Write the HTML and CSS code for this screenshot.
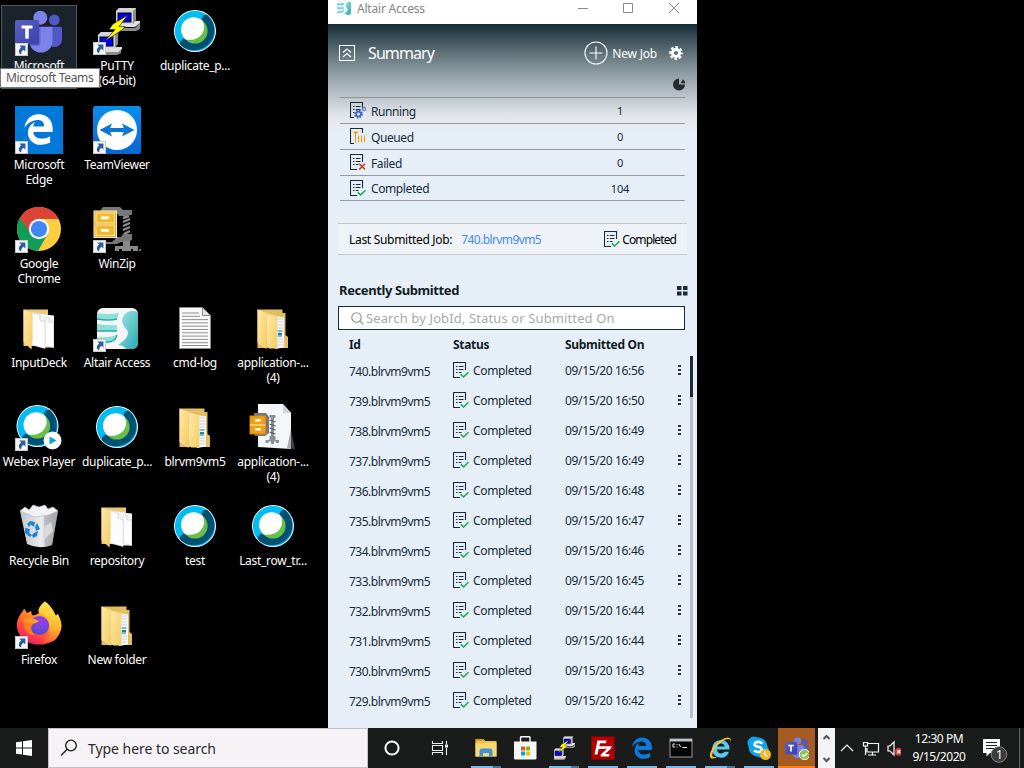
FILE: index.html
```html
<!DOCTYPE html>
<html lang="en">
<head>
<meta charset="utf-8">
<title>Desktop</title>
<link rel="stylesheet" href="styles.css">
</head>
<body>
<svg class="defs" width="0" height="0">
  <defs>
    <linearGradient id="gTeam" x1="0" y1="0" x2="1" y2="1"><stop offset="0" stop-color="#5a62c3"/><stop offset="1" stop-color="#3940ab"/></linearGradient>
    <linearGradient id="gTv" x1="0" y1="0" x2="0" y2="1"><stop offset="0" stop-color="#0a8eec"/><stop offset="1" stop-color="#0667d2"/></linearGradient>
    <linearGradient id="gFolder" x1="0" y1="0" x2="1" y2="1"><stop offset="0" stop-color="#ffe9a2"/><stop offset="1" stop-color="#f2cd6a"/></linearGradient>
    <linearGradient id="gTeal" x1="0" y1="0" x2="1" y2="1"><stop offset="0" stop-color="#a6e6e2"/><stop offset="1" stop-color="#27a9b4"/></linearGradient>
    <linearGradient id="gFox" x1="0.8" y1="0" x2="0.2" y2="1"><stop offset="0" stop-color="#fff44f"/><stop offset=".4" stop-color="#ff9a1f"/><stop offset=".75" stop-color="#ff4240"/><stop offset="1" stop-color="#e31587"/></linearGradient>
    <linearGradient id="gFoxTail" x1="0.6" y1="0" x2="0.4" y2="1"><stop offset="0" stop-color="#fff14a"/><stop offset=".6" stop-color="#ffb52e"/><stop offset="1" stop-color="#ff5a36"/></linearGradient>
    <radialGradient id="gGlobe" cx=".6" cy=".2" r=".9"><stop offset="0" stop-color="#a03cf0"/><stop offset="1" stop-color="#4a4fc4"/></radialGradient>
    <linearGradient id="gBin" x1="0" y1="0" x2="1" y2="0"><stop offset="0" stop-color="#c2c5c8"/><stop offset=".55" stop-color="#e9ebed"/><stop offset="1" stop-color="#9fa3a7"/></linearGradient>
  </defs>
  <symbol id="shortcut" viewBox="0 0 48 48">
    <rect x=".5" y="35.5" width="12" height="12" fill="#f7f7f9" stroke="#c9c9cd"/>
    <path d="M4.300 37.500H10.400V43.500L8.500 41.700C6.600 43.200 6 44.500 6.300 46.300C3.600 45.600 2.600 42 6.200 39.400Z" fill="#2a5d9f"/>
  </symbol>
  <symbol id="teams" viewBox="0 0 48 48">
    <circle cx="39.300" cy="12" r="5.400" fill="#5059c9"/>
    <path d="M35 18.700H45.500Q47 18.700 47 20.200V31.500A7.500 7.500 0 0 1 35 37.500Z" fill="#5059c9"/>
    <circle cx="25.300" cy="9.700" r="7" fill="#7b83eb"/>
    <path d="M14.300 18.700H36Q37.500 18.700 37.500 20.500V33A11.600 11.600 0 0 1 14.300 33Z" fill="#7b83eb"/>
    <path d="M14.300 18.700H25.500V35Q25.500 38 22.500 38H15.500Z" fill="#4a50a8" opacity=".5"/>
    <rect y="12" width="24" height="24.500" rx="2" fill="url(#gTeam)"/>
    <path d="M6.500 17.500H17.500V20.600H13.700V30.800H10.300V20.600H6.500Z" fill="#fff"/>
  </symbol>
  <symbol id="putty" viewBox="0 0 48 48">
    <path d="M25 15L27 21H42L47 16V22L43 24H23V18Z" fill="#8c8c8c"/><path d="M22 17L26 14H47V16L42 20H22Z" fill="#e0e0e0"/>
    <path d="M23 4L26 1H43V13L40 17H23Z" fill="#8c8c8c"/><path d="M23 4H40V17H23ZM23 4L26 1H43L40 4Z" fill="#d4d4d4"/>
    <rect x="25" y="6" width="13" height="9" fill="#00e" stroke="#000"/>
    <path d="M7 41H28V46L24 48H5V42Z" fill="#8c8c8c"/><path d="M5 40H29V42L25 45H5Z" fill="#e0e0e0"/>
    <path d="M5 28L8 25H25V37L22 41H5Z" fill="#8c8c8c"/><path d="M5 28H22V41H5ZM5 28L8 25H25L22 28Z" fill="#d4d4d4"/>
    <rect x="7" y="30" width="13" height="9" fill="#00e" stroke="#000"/>
    <path d="M35 8L20 17L16 22.500H22L12 34L29 23L32 19.500H26Z" fill="#ff0" stroke="#222" stroke-width=".7"/>
  </symbol>
  <symbol id="webex" viewBox="0 0 48 48">
    <circle cx="24" cy="24" r="21" fill="#fff"/>
    <circle cx="24" cy="24" r="16.300" fill="none" stroke="#00bcf2" stroke-width="7.600"/>
    <path d="M34.800 11.800A16.300 16.300 0 0 1 12.800 35.800" fill="none" stroke="#005073" stroke-width="7.600" stroke-linecap="round"/>
    <circle cx="24" cy="24" r="12.600" fill="#6abf4b"/>
    <path d="M31.700 14C37 26 26 35.500 14.300 32.200A12.600 12.600 0 1 1 31.700 14Z" fill="#fff"/>
  </symbol>
  <symbol id="edgeE" viewBox="0 0 512 512"><path d="M25.714 228.163c.111-.162.230-.323.342-.485-.021.162-.045.323-.065.485h-.277zm460.572 15.508c0-44.032-7.754-84.465-28.801-122.405C416.498 47.879 343.912 8.001 258.893 8.001 118.962 7.724 40.617 113.214 26.056 227.679c42.429-61.312 117.073-121.376 220.375-124.966 0 0 109.666 0 99.419 104.957H169.997c6.369-37.386 18.554-58.986 34.339-78.926-75.048 34.900-121.850 96.096-120.742 188.315.830 71.448 50.124 144.836 120.743 171.976 83.357 31.847 192.776 7.200 240.132-21.324V363.307c-80.864 56.494-270.871 60.925-272.255-67.572h314.073v-52.064z" fill="currentColor"/></symbol>
  <symbol id="tv" viewBox="0 0 48 48">
    <rect width="48" height="48" rx="2.500" fill="url(#gTv)"/><circle cx="24" cy="24" r="20" fill="#fff"/>
    <path d="M6.500 24L19 17.500L17.200 22H30.800L29 17.500L41.500 24L29 30.500L30.800 26H17.200L19 30.500Z" fill="#0b76d8"/>
  </symbol>
  <symbol id="chrome" viewBox="0 0 48 48">
    <circle cx="24" cy="24" r="22" fill="#ffcd40"/>
    <path d="M24 24L5 12.900A22 22 0 0 1 43.500 14H24Z" fill="#db4437"/>
    <path d="M24 24L5 12.900A22 22 0 0 0 23 46L32.700 29Z" fill="#0f9d58"/>
    <path d="M5 12.900A22 22 0 0 1 43.500 14H24Q17 14 15.300 19L14.500 27Z" fill="#db4437"/>
    <circle cx="24" cy="24" r="10.200" fill="#fff"/><circle cx="24" cy="24" r="8.100" fill="#4285f4"/>
  </symbol>
  <symbol id="winzip" viewBox="0 0 48 48">
    <path d="M10 2H27L30 5H39V10H36L32 11H26L22 6H7Z" fill="#777"/>
    <path d="M8 37H19L24 32H28L30 29H39V35L34 37H28L24 39H8Z" fill="#777"/>
    <path d="M30 13L36 11M30 17L37 14M30 21L37 18M30 25L37 22M31 29L37 26" stroke="#8e8e8e" stroke-width="2.400"/>
    <path d="M30 36H37V41H45V46H40V44H38V46H29V44H26V46H22V41H30Z" fill="#888"/><path d="M46 44H48V46H46Z" fill="#777"/>
    <rect x="1" y="6" width="22.500" height="26.500" fill="#e8a71c" stroke="#fff2c8"/>
    <rect x="3" y="8" width="18.500" height="10" fill="#f2b92e" stroke="#ffe9ae"/><rect x="3" y="20" width="18.500" height="10.500" fill="#f2b92e" stroke="#ffe9ae"/>
    <path d="M8 11.500H16V14.300H8ZM8 24H16V26.800H8Z" fill="#fff"/>
  </symbol>
  <symbol id="deck" viewBox="0 0 48 48">
    <path d="M8.500 5.500H33V42H8.500Z" fill="#edca72"/>
    <path d="M17 8L31 10.500V43L17 39Z" fill="#dfe3e8"/><path d="M24 10L39 11.500V43.500H28Z" fill="#f4f5f7"/>
    <path d="M17 9L25 11L30 17V44.500L17 41Z" fill="#fcfcfd" stroke="#d6d8dc" stroke-width=".6"/>
    <path d="M31 13L34 14L38.500 18V43.500L30.500 41.500Z" fill="#fff" stroke="#d6d8dc" stroke-width=".6"/><path d="M25 11V16L30 18M34 14V18H38.500" stroke="#bfc1c6" fill="none" stroke-width=".7"/>
    <path d="M8.500 5.500L17.500 9V33L16.500 45.500L8.500 38Z" fill="url(#gFolder)"/>
  </symbol>
  <symbol id="folder" viewBox="0 0 48 48">
    <path d="M8.500 5.500H33.500V9H36.500V31L39 33V44H8.500Z" fill="#e3bd62"/>
    <path d="M26 12L35 13.500V43.500L26 45Z" fill="#f6f8fa"/>
    <path d="M29 15H34M29 18H34M29 21H34M29 24H34M29 35H34M29 38H34M29 41H34" stroke="#c5ccd3" stroke-width=".9"/>
    <path d="M28.500 27H33.500M28.500 32H33" stroke="#6dbbe5" stroke-width="2"/><path d="M29 30H33" stroke="#2479a7" stroke-width="2"/>
    <path d="M9 6.500L28.500 12V44.500H20Z" fill="#f1cf78"/><path d="M18 10L28 12.500V44.500L18 43Z" fill="url(#gFolder)"/>
    <path d="M8.500 5.500L17.500 9V45L8.500 39Z" fill="url(#gFolder)"/>
  </symbol>
  <symbol id="altair" viewBox="0 0 48 48">
    <rect x="4" y="4" width="41" height="41" rx="6" fill="#f6f5f5"/>
    <path d="M4 9Q16 11 26 9L24 15Q14 16.500 4 15ZM4 20Q16 22 24 21V27H4ZM4 33Q16 34 24 31Q22 38 15 38H4Z" fill="#8ce0dc"/>
    <path d="M4 15Q16 17 24 15M4 27H24M4 38H15Q22 38 24 31" fill="none" stroke="#25aaae" stroke-width="1.300"/>
    <path d="M45 8Q36 5 31 11Q26 18 34 26Q38 32 25 41Q30 41 33 45H39Q45 45 45 38Z" fill="url(#gTeal)"/>
  </symbol>
  <symbol id="log" viewBox="0 0 48 48">
    <path d="M8.500 3.500H31.500L39.500 11.500V44.500H8.500Z" fill="#fafafa" stroke="#8b8b8b"/><path d="M31.500 3.500V11.500H39.500Z" fill="#e4e4e4" stroke="#8b8b8b"/>
    <path d="M11 9H28M11 12.300H29M11 15.600H37M11 18.900H37M11 22.200H37M11 25.500H37M11 28.800H37M11 32.100H37M11 35.400H37M11 38.700H37M11 41.500H37" stroke="#8f8f8f"/>
  </symbol>
  <symbol id="zipdoc" viewBox="0 0 48 48">
    <path d="M9 1H34L42 10V46L9 44Z" fill="#f4f7fa"/><path d="M34 1L42 10H34Z" fill="#cdd5dc"/><path d="M42 26L46 46L38 45.500Z" fill="#6a7076" opacity=".55"/>
    <path d="M5 10H17L20 14V30L16 33H6Z" fill="#777"/>
    <path d="M20.500 12H26.500V15H25V33H26.500V37H30V40H27V38.500H25V41H22V38.500H19.500V40H16.500V37H20.500V33H22V15H20.500Z" fill="#8d9093"/><path d="M20.500 17L26.500 19M20.500 21L26.500 23M20.500 25L26.500 27M20.500 29L26.500 31" stroke="#55595d" stroke-width="1.300"/>
    <rect x="1" y="13" width="15.500" height="18" fill="#f0a016" stroke="#d98808"/><path d="M1 22H16.500" stroke="#fff1bb"/><rect x="6" y="16" width="6" height="2.500" fill="#fff6d6"/><rect x="6" y="25" width="6" height="2.500" fill="#fff6d6"/>
  </symbol>
  <symbol id="bin" viewBox="0 0 48 48">
    <path d="M5 9L43 9L37 43Q24 48 12 42Z" fill="url(#gBin)"/>
    <path d="M5 9L10 5L14 8L18 3L24 5L30 3L33 7L38 5L43 9L34 13L20 15Z" fill="#f1f2f3" stroke="#b9bcc0" stroke-width=".7"/>
    <path d="M29 15L43 9L37 43L30 45Z" fill="#a3a8ad" opacity=".6"/><path d="M29 25L36 20L38 29L30 37Z" fill="#d8dadd"/>
    <path d="M12 22L15 19L20 20L19 25L16 22.500L14 25ZM22 21L25 27L21 29L20 25ZM10 26L15 27L14 31L17 33L15 35L10 31ZM19 31L23 29L22 34L18 36L17 33Z" fill="#1c83d6"/>
  </symbol>
  <symbol id="firefox" viewBox="0 0 48 48">
    <path d="M30 .500C36 5 39 11 41 15L42.500 13C46 18 47 23 46.500 27A22.500 19.500 0 0 1 2 27C1 21 4 14 8 10L9 7.500L12 12L16 10L17 14C20 15 22 13 24 12C22 8 27 3 30 .500Z" fill="url(#gFox)"/>
    <path d="M30 .500C36 5 39 11 41 15L42.500 13C48 23 46 33 40 39C36 42 31 42 28 40C37 34 37 20 27 13C21 11 24 5 30 .500Z" fill="url(#gFoxTail)"/>
    <circle cx="24.500" cy="24.500" r="9.600" fill="url(#gGlobe)"/>
    <path d="M7 18C12 16 18 17 24 20Q21 23 18 23C15 26 16 31 20 34C13 35 9 29 9 23Z" fill="#ff7b27"/><path d="M8 18Q16 16 24 20Q20 23 16 22Q11 22 8 18Z" fill="#ff9d25"/>
  </symbol>
  <symbol id="doc" viewBox="0 0 16 17">
    <path d="M12.500 8V.500H.500V15.500H7" fill="none" stroke="#172b38" stroke-width="1.100"/>
    <path d="M3 4.500H4.500M3 7.500H4.500M3 10.500H4.500M5.800 4.500H10.500M5.800 7.500H10.500M5.800 10.500H8.500" stroke="#172b38"/>
  </symbol>
  <symbol id="docDone" viewBox="0 0 16 17"><use href="#doc" width="16" height="17"/><path d="M7.800 12.300L10.600 15L15.500 10.200" fill="none" stroke="#18a957" stroke-width="1.600"/></symbol>
  <symbol id="docRun" viewBox="0 0 16 17"><use href="#doc" width="16" height="17"/><path d="M4 8H16V16.500H4Z" fill="#e6ebf1"/>
    <circle cx="8.500" cy="12" r="3.500" fill="none" stroke="#3368cf" stroke-width="2" stroke-dasharray="1.500 1.249"/><circle cx="8.500" cy="12" r="2.400" fill="none" stroke="#3368cf" stroke-width="1.600"/>
    <circle cx="14" cy="7" r="1.600" fill="none" stroke="#5b83d4" stroke-width="1.200"/>
  </symbol>
  <symbol id="docQueue" viewBox="0 0 16 17"><path d="M12.500 5V.500H.500V15.500H4" fill="none" stroke="#172b38" stroke-width="1.100"/>
    <path d="M3 3.500H8.500L5.700 6.500Z" fill="#f39a12"/><path d="M5.500 5V14.500M8.500 7.500V14.500M11.500 7.500V14.500M14.500 7.500V14.500" stroke="#f39a12" stroke-width="1.100"/>
  </symbol>
  <symbol id="docFail" viewBox="0 0 16 17"><use href="#doc" width="16" height="17"/><path d="M9.300 9.800L15 15.500M15 9.800L9.300 15.500" stroke="#cf3510" stroke-width="1.600"/></symbol>
</svg>

<main class="desktop">
  <section class="icons">
    <div class="item c1 selected"><svg class="pic"><use href="#teams"/><use href="#shortcut"/></svg><span>Microsoft</span></div>
    <div class="item"><svg class="pic"><use href="#putty"/><use href="#shortcut"/></svg><span>PuTTY<br>(64-bit)</span></div>
    <div class="item"><svg class="pic"><use href="#webex"/></svg><span>duplicate_p...</span></div>

    <div class="item c1"><svg class="pic"><rect width="48" height="48" fill="#0078d7"/><use class="white" href="#edgeE" x="7.500" y="7.800" width="32" height="31.500"/><use href="#shortcut"/></svg><span>Microsoft<br>Edge</span></div>
    <div class="item"><svg class="pic"><use href="#tv"/><use href="#shortcut"/></svg><span>TeamViewer</span></div>

    <div class="item c1"><svg class="pic"><use href="#chrome"/><use href="#shortcut"/></svg><span>Google<br>Chrome</span></div>
    <div class="item"><svg class="pic"><use href="#winzip"/><use href="#shortcut"/></svg><span>WinZip</span></div>

    <div class="item c1"><svg class="pic"><use href="#deck"/></svg><span>InputDeck</span></div>
    <div class="item"><svg class="pic"><use href="#altair"/><use href="#shortcut"/></svg><span>Altair Access</span></div>
    <div class="item"><svg class="pic"><use href="#log"/></svg><span>cmd-log</span></div>
    <div class="item"><svg class="pic"><use href="#folder"/></svg><span>application-...<br>(4)</span></div>

    <div class="item c1"><svg class="pic"><use href="#webex" x="-1.500" y="-1"/><circle cx="37.500" cy="37.500" r="9" fill="#fff"/><path d="M34.500 33.500L41.500 37.500L34.500 41.500Z" fill="#07a5dc"/><use href="#shortcut"/></svg><span>Webex Player</span></div>
    <div class="item"><svg class="pic"><use href="#webex"/></svg><span>duplicate_p...</span></div>
    <div class="item"><svg class="pic"><use href="#folder"/></svg><span>blrvm9vm5</span></div>
    <div class="item"><svg class="pic"><use href="#zipdoc"/></svg><span>application-...<br>(4)</span></div>

    <div class="item c1"><svg class="pic"><use href="#bin"/></svg><span>Recycle Bin</span></div>
    <div class="item"><svg class="pic"><use href="#deck"/></svg><span>repository</span></div>
    <div class="item"><svg class="pic"><use href="#webex"/></svg><span>test</span></div>
    <div class="item"><svg class="pic"><use href="#webex"/></svg><span>Last_row_tr...</span></div>

    <div class="item c1"><svg class="pic"><use href="#firefox"/><use href="#shortcut"/></svg><span>Firefox</span></div>
    <div class="item"><svg class="pic"><use href="#folder"/></svg><span>New folder</span></div>
    <div class="tooltip">Microsoft Teams</div>
  </section>

  <section class="window">
    <header class="titlebar">
      <svg class="logo" viewBox="4 4 41 41"><use href="#altair" width="48" height="48"/></svg>
      <span class="title">Altair Access</span>
      <svg class="winctl" width="104" height="16" fill="none" stroke="#8b8b8b"><path d="M1 8.500H11M46.500 3.500H55.500V12.500H46.500ZM92 3L102 13M102 3L92 13"/></svg>
    </header>
    <div class="summary-head">
      <svg class="collapse" width="16" height="16" fill="none" stroke="#fff"><rect x=".5" y=".5" width="15" height="15"/><path d="M4 7.500L8 4L12 7.500M4 12L8 8.500L12 12" stroke-width="1.200"/></svg>
      <h1>Summary</h1>
      <svg class="plus" width="24" height="24" fill="none" stroke="#fff" stroke-width="1.100"><circle cx="12" cy="12" r="11"/><path d="M12 5.500V18.500M5.500 12H18.500"/></svg>
      <span class="newjob">New Job</span>
      <svg width="14" height="14" fill="none" stroke="#fff"><circle cx="7" cy="7" r="3.600" stroke-width="3"/><circle cx="7" cy="7" r="5.900" stroke-width="2.200" stroke-dasharray="2.600 2.034" stroke-dashoffset="1.300"/></svg>
    </div>
    <div class="chart-row"><svg width="13" height="13" fill="#262b2e"><path d="M6 .500A6 6 0 1 0 12 6.500H6Z"/><path d="M7.500 5.200L10 1.200A6 6 0 0 1 12.300 5.200Z"/></svg></div>
    <ul class="counts">
      <li><svg class="st"><use href="#docRun"/></svg><span>Running</span><b>1</b></li>
      <li><svg class="st"><use href="#docQueue"/></svg><span>Queued</span><b>0</b></li>
      <li><svg class="st"><use href="#docFail"/></svg><span>Failed</span><b>0</b></li>
      <li class="last"><svg class="st"><use href="#docDone"/></svg><span>Completed</span><b>104</b></li>
    </ul>
    <div class="last-job"><span>Last Submitted Job:</span><a>740.blrvm9vm5</a><svg class="st"><use href="#docDone"/></svg><span class="done">Completed</span></div>
    <div class="recent-head"><h2>Recently Submitted</h2><svg width="11" height="10" fill="#172b38"><path d="M0 0H4.500V4H0ZM6 0H10.500V4H6ZM0 5.500H4.500V9.500H0ZM6 5.500H10.500V9.500H6Z"/></svg></div>
    <div class="search"><svg width="13" height="13" fill="none" stroke="#8f8f8f" stroke-width="1.100"><circle cx="5.500" cy="5.500" r="4.700"/><path d="M9 9L12.300 12.300"/></svg><span>Search by JobId, Status or Submitted On</span></div>
    <div class="cols"><b>Id</b><b>Status</b><b>Submitted On</b></div>
    <div class="list">
      <div class="rows">
        <div class="row"><span class="id">740.blrvm9vm5</span><svg class="st"><use href="#docDone"/></svg><span>Completed</span><span class="date">09/15/20 16:56</span><i class="dots"></i></div>
        <div class="row"><span class="id">739.blrvm9vm5</span><svg class="st"><use href="#docDone"/></svg><span>Completed</span><span class="date">09/15/20 16:50</span><i class="dots"></i></div>
        <div class="row"><span class="id">738.blrvm9vm5</span><svg class="st"><use href="#docDone"/></svg><span>Completed</span><span class="date">09/15/20 16:49</span><i class="dots"></i></div>
        <div class="row"><span class="id">737.blrvm9vm5</span><svg class="st"><use href="#docDone"/></svg><span>Completed</span><span class="date">09/15/20 16:49</span><i class="dots"></i></div>
        <div class="row"><span class="id">736.blrvm9vm5</span><svg class="st"><use href="#docDone"/></svg><span>Completed</span><span class="date">09/15/20 16:48</span><i class="dots"></i></div>
        <div class="row"><span class="id">735.blrvm9vm5</span><svg class="st"><use href="#docDone"/></svg><span>Completed</span><span class="date">09/15/20 16:47</span><i class="dots"></i></div>
        <div class="row"><span class="id">734.blrvm9vm5</span><svg class="st"><use href="#docDone"/></svg><span>Completed</span><span class="date">09/15/20 16:46</span><i class="dots"></i></div>
        <div class="row"><span class="id">733.blrvm9vm5</span><svg class="st"><use href="#docDone"/></svg><span>Completed</span><span class="date">09/15/20 16:45</span><i class="dots"></i></div>
        <div class="row"><span class="id">732.blrvm9vm5</span><svg class="st"><use href="#docDone"/></svg><span>Completed</span><span class="date">09/15/20 16:44</span><i class="dots"></i></div>
        <div class="row"><span class="id">731.blrvm9vm5</span><svg class="st"><use href="#docDone"/></svg><span>Completed</span><span class="date">09/15/20 16:44</span><i class="dots"></i></div>
        <div class="row"><span class="id">730.blrvm9vm5</span><svg class="st"><use href="#docDone"/></svg><span>Completed</span><span class="date">09/15/20 16:43</span><i class="dots"></i></div>
        <div class="row"><span class="id">729.blrvm9vm5</span><svg class="st"><use href="#docDone"/></svg><span>Completed</span><span class="date">09/15/20 16:42</span><i class="dots"></i></div>
      </div>
      <div class="track"><div class="thumb"></div></div>
    </div>
  </section>
</main>

<footer class="taskbar">
  <div class="start"><svg width="16" height="16" fill="#fff"><path d="M0 2.200L6 1.400V7.500H0ZM7 1.200L16 0V7.500H7ZM0 8.500H6V14.600L0 13.800ZM7 8.500H16V16L7 14.800Z"/></svg></div>
  <div class="tasksearch"><svg width="18" height="18" fill="none" stroke="#1c1c1c" stroke-width="1.300"><circle cx="11" cy="6.500" r="5.300"/><path d="M7.200 10.300L1 16.500"/></svg><span>Type here to search</span></div>
  <div class="sys"><svg width="16" height="16" fill="none" stroke="#fff" stroke-width="2"><circle cx="8" cy="8" r="6.600"/></svg></div>
  <div class="sys"><svg width="18" height="16" fill="none" stroke="#eee" stroke-width="1.100"><path d="M1.500 1V3.500H11.500V1M1.500 15V12.500H11.500V15M1.500 5.500H11.500V10.500H1.500ZM15.500 1V4M15.500 8V15"/><path d="M14 4.500H17V7.500H14Z" fill="#fff" stroke="none"/></svg></div>
  <nav class="apps">
    <div class="app on multi"><svg viewBox="0 0 24 24"><path d="M1.500 3H9.500L11 5H22.500V20.500H1.500Z" fill="#f5c447"/><path d="M1.500 3H9.500L11 5H1.500Z" fill="#d99a1c"/><path d="M1.500 7H22.500V20.500H1.500Z" fill="#fbd972"/><path d="M5.500 20.500V15Q5.500 12.500 8 12.500H16Q18.500 12.500 18.500 15V20.500H15V17H9V20.500Z" fill="#3f93d6"/></svg></div>
    <div class="app"><svg viewBox="0 0 24 24"><path d="M7.500 6V1.500Q7.500.800 8.500.800H16Q17 .800 17 1.500V6" fill="none" stroke="#fff" stroke-width="1.400"/><path d="M1 5.500H23.500V22.500Q23.500 23.500 22 23.500H2.500Q1 23.500 1 22.500Z" fill="#f7f7f7"/><path d="M8 10.500H12V14.500H8Z" fill="#f25022"/><path d="M13 10.500H17V14.500H13Z" fill="#7fba00"/><path d="M8 15.500H12V19.500H8Z" fill="#00a4ef"/><path d="M13 15.500H17V19.500H13Z" fill="#ffb900"/></svg></div>
    <div class="app on multi"><svg viewBox="0 0 24 24"><use href="#putty" x="-.5" width="24" height="24"/></svg></div>
    <div class="app on"><svg viewBox="0 0 24 24"><rect x=".5" y=".5" width="23" height="23" fill="#b30000" stroke="#7d0000" stroke-dasharray="1 1"/><path d="M3.500 18.500L6.500 4.500H15.500L14.900 7.300H9L8.300 10.300H13L12.400 13H7.700L6.500 18.500ZM12 10.300H20.500L20 12.500L14 18H18.500L17.900 20.500H9.500L10 18.300L16 12.800H11.500Z" fill="#fff"/></svg></div>
    <div class="app on"><svg viewBox="0 0 24 24"><use class="edgeblue" href="#edgeE" x="1" y="1.200" width="22" height="22"/></svg></div>
    <div class="app on"><svg viewBox="0 0 24 24"><rect x="1" y="3" width="22" height="18" fill="#050505" stroke="#999"/><path d="M1 3H23V5.500H1Z" fill="#bfc4c8"/><path d="M6 8H4V11H6M8 8V9M8 10.500V11.500M10 8L11.500 11M13.500 11.500H18" stroke="#eee" fill="none"/></svg></div>
    <div class="app on multi"><svg viewBox="0 0 24 24"><path d="M21.500 13.500H9Q9.500 17.500 13 17.500Q15.500 17.500 16.500 15.800H21Q19 21.800 13 21.800Q4.500 21.300 4 13Q4.500 4.500 13 4Q21.500 4.500 21.500 13.500ZM9 10.500H16.800Q16 7.500 13 7.500Q10 7.500 9 10.500Z" fill="#5cc5f0"/><path d="M4 22.500C-1 22 3 10 13 4C19 .500 24 .500 22.500 6C23 2 19 2 14 5.500C6 11 2 20 5.500 21Q8 21.500 11 19.500Q7 23 4 22.500Z" fill="#f8c62c"/></svg></div>
    <div class="app on"><svg viewBox="0 0 24 24"><circle cx="7" cy="7" r="6.500" fill="#12a5e6"/><circle cx="15" cy="15" r="7" fill="#12a5e6"/><circle cx="11" cy="11" r="9.500" fill="#12a5e6"/><path d="M15.500 7.500Q11.500 4.500 8.200 6.800Q6 9.500 11 10.800Q16 12 14.500 14.800Q11.500 17.500 7 14.500" fill="none" stroke="#fff" stroke-width="2.600"/><circle cx="18.500" cy="18.500" r="5.500" fill="#f6b828"/><path d="M18 15.500V19L20.500 20.500" fill="none" stroke="#fff" stroke-width="1.300"/></svg></div>
    <div class="app on active"><svg viewBox="0 0 24 24"><use href="#teams" width="24" height="24"/><circle cx="19.500" cy="18.500" r="5.200" fill="#92c353" stroke="#fff"/><path d="M17 18.500L19 20.500L22.300 17" fill="none" stroke="#fff" stroke-width="1.300"/></svg></div>
  </nav>
  <div class="scroller"><svg width="17" height="40" fill="none" stroke="#555" stroke-width="2"><path d="M5.500 11L8.500 8L11.500 11M5.500 30L8.500 33L11.500 30"/></svg></div>
  <svg class="tray" width="61" height="40" fill="none" stroke="#fff" stroke-width="1.200"><path d="M1 23L7 17L13 23"/><path d="M28 15.500H38.500V24H27V20M32.500 24V27M28 27H36M23.500 14.500H27.500V18H23.500ZM25.500 18V27"/><path d="M48 18V23H50L54 27V14L50 18Z"/><circle cx="58.700" cy="23.700" r="4" fill="#d5303e" stroke="none"/><path d="M57 22L60.400 25.400M60.400 22L57 25.400"/></svg>
  <div class="clock">12:30 PM<br>9/15/2020</div>
  <div class="notify"><svg width="26" height="28"><path d="M0 2H17V16H7L3.500 19.500V16H0Z" fill="#fff"/><path d="M3 5.500H14M3 8.500H14M3 11.500H11" stroke="#222"/><circle cx="16" cy="17.500" r="7.800" fill="#3a3e3d" stroke="#80858a"/></svg><span>1</span></div>
</footer>
</body>
</html>
```
FILE: styles.css
```css
* { box-sizing: border-box; }
body {
  margin: 0;
  width: 1024px;
  height: 768px;
  overflow: hidden;
  display: flex;
  flex-direction: column;
  background: #000;
  font: 12px/15px "Noto Sans", "Open Sans", sans-serif;
  letter-spacing: -0.3px;
}
svg { display: block; flex: none; }
.defs { position: absolute; }
.desktop { display: flex; height: 728px; }
.icons {
  position: relative;
  width: 328px;
  display: grid;
  grid-template-columns: repeat(4, 78px);
  grid-auto-rows: 99px;
  align-content: start;
  color: #fff;
}
.item { display: flex; flex-direction: column; align-items: center; padding-top: 7px; text-align: center; white-space: nowrap; }
.c1 { grid-column: 1; }
.pic { width: 48px; height: 48px; margin-bottom: 3px; }
.white { color: #fff; }
.edgeblue { color: #0a7bd8; }
.selected { height: 84px; width: 76px; margin: 5px 0 0 1px; padding-top: 2px; background: #1a2329; border: 1px solid #4e5a61; }
.selected .pic { margin-bottom: 2px; }
.tooltip {
  position: absolute;
  left: 0;
  top: 68px;
  width: 100px;
  height: 20px;
  border: 1px solid #777;
  background: #fff;
  color: #555;
  padding-left: 5px;
  line-height: 18px;
  letter-spacing: -0.35px;
  white-space: nowrap;
}

.window { width: 369px; display: flex; flex-direction: column; color: #172b38; background: linear-gradient(#142c37 24px, #607279 53px, #929fa7 75px, #bcc5cb 97px, #dde2e7 113px, #e7e9ef 123px, #e6eff7 133px); }
.titlebar { height: 24px; display: flex; align-items: flex-start; background: #fff; color: #858585; }
.logo { width: 14px; height: 14px; margin: 1px 6px 0 9px; }
.title { padding-top: 1px; letter-spacing: -0.2px; }
.winctl { margin: 0 16px 0 auto; }
.summary-head { height: 50px; display: flex; align-items: center; padding: 8px 14px 0 11px; color: #fff; }
h1 { font-size: 16px; font-weight: 400; letter-spacing: -0.9px; line-height: 20px; margin: 0 auto 0 13px; }
.newjob { margin: 0 12px 0 4px; letter-spacing: -0.2px; }
.chart-row { height: 23px; display: flex; justify-content: flex-end; padding: 4px 11px 0; }
.counts { list-style: none; margin: 0 12px; padding: 0; border-top: 1px solid #8f9497; }
.counts li { height: 26px; display: flex; align-items: center; border-bottom: 1px solid #9a989e; padding-left: 10px; letter-spacing: -0.4px; }
.counts .last { height: 25px; }
.counts li > span { padding-top: 1px; }
.st { width: 16px; height: 17px; margin-right: 5px; }
.counts b { margin-left: auto; margin-right: 35px; width: 60px; text-align: center; font-weight: 400; font-size: 11px; letter-spacing: -0.2px; }
.last-job { height: 32px; margin: 22px 10px 0; padding: 0 11px; display: flex; align-items: center; border: solid #c6c6c6; border-width: 1px 0; background: #eff3f8; color: #000; }
.last-job a { color: #458af2; margin: 0 auto 0 9px; letter-spacing: -0.6px; }
.last-job .st { margin-right: 2px; }
.done { letter-spacing: -0.9px; }
.recent-head { height: 51px; display: flex; align-items: flex-end; justify-content: space-between; padding: 0 9px 9px 11px; }
.recent-head svg { margin-bottom: 1px; }
h2 { margin: 0; font-size: 13px; line-height: 14px; letter-spacing: -0.4px; font-weight: 700; color: #111c24; }
.search { height: 24px; width: 347px; margin-left: 10px; border: 1px solid #172b38; background: #fff; display: flex; align-items: center; padding-left: 12px; gap: 2px; color: #a9a9a9; font-size: 13px; letter-spacing: 0.12px; }
.cols { display: grid; grid-template-columns: 104px 112px 1fr; padding: 7px 0 0 21px; height: 26px; color: #111c24; }
.list { display: flex; }
.rows { width: 362px; margin-top: -1px; }
.row { height: 30px; display: grid; grid-template-columns: 104px 20px 92px 112px 4px; align-items: center; padding-left: 21px; letter-spacing: -0.35px; }
.row .st { margin: 0; }
.row .id { padding-top: 2px; letter-spacing: -0.5px; }
.dots { width: 3px; height: 10px; margin-left: 1px; background: linear-gradient(#333 2px, transparent 2px 4px, #333 4px 6px, transparent 6px 8px, #333 8px); }
.track { width: 3px; height: 362px; background: #b5bdc7; }
.thumb { height: 41px; background: #172b38; }

.taskbar { height: 40px; display: flex; background: #191c1a; color: #fff; }
.taskbar > * { flex: none; }
.start { width: 48px; display: flex; align-items: center; justify-content: center; }
.tasksearch { width: 320px; display: flex; align-items: center; gap: 10px; padding-left: 11px; background: #f6f3f7; border: 1px solid #c5c2c6; color: #2b2b2b; font-size: 14px; letter-spacing: -0.05px; }
.sys { width: 48px; display: flex; align-items: center; justify-content: center; }
.apps { display: flex; margin-left: 2px; }
.app { width: 39px; display: flex; flex-direction: column; align-items: center; padding-top: 8px; justify-content: space-between; }
.app svg { width: 24px; height: 24px; }
.on::after { content: ""; width: 30px; height: 2px; background: #76b9ed; }
.multi::after { background: linear-gradient(90deg, #76b9ed 22px, #4b7696 22px); }
.active { width: 37px; background: #a65c20; }
.active::after { width: 37px; background: #ff7a12; }
.scroller { width: 17px; margin-left: 3px; background: #f6f3f7; }
.tray { margin-left: 5px; }
.clock { width: 76px; text-align: center; line-height: 18px; padding-top: 2px; letter-spacing: -0.45px; }
.notify { position: relative; margin-left: 6px; width: 37px; padding-top: 9px; border-right: 1px solid #66696a; display: flex; }
.notify span { position: absolute; left: 13px; top: 19px; }
```
